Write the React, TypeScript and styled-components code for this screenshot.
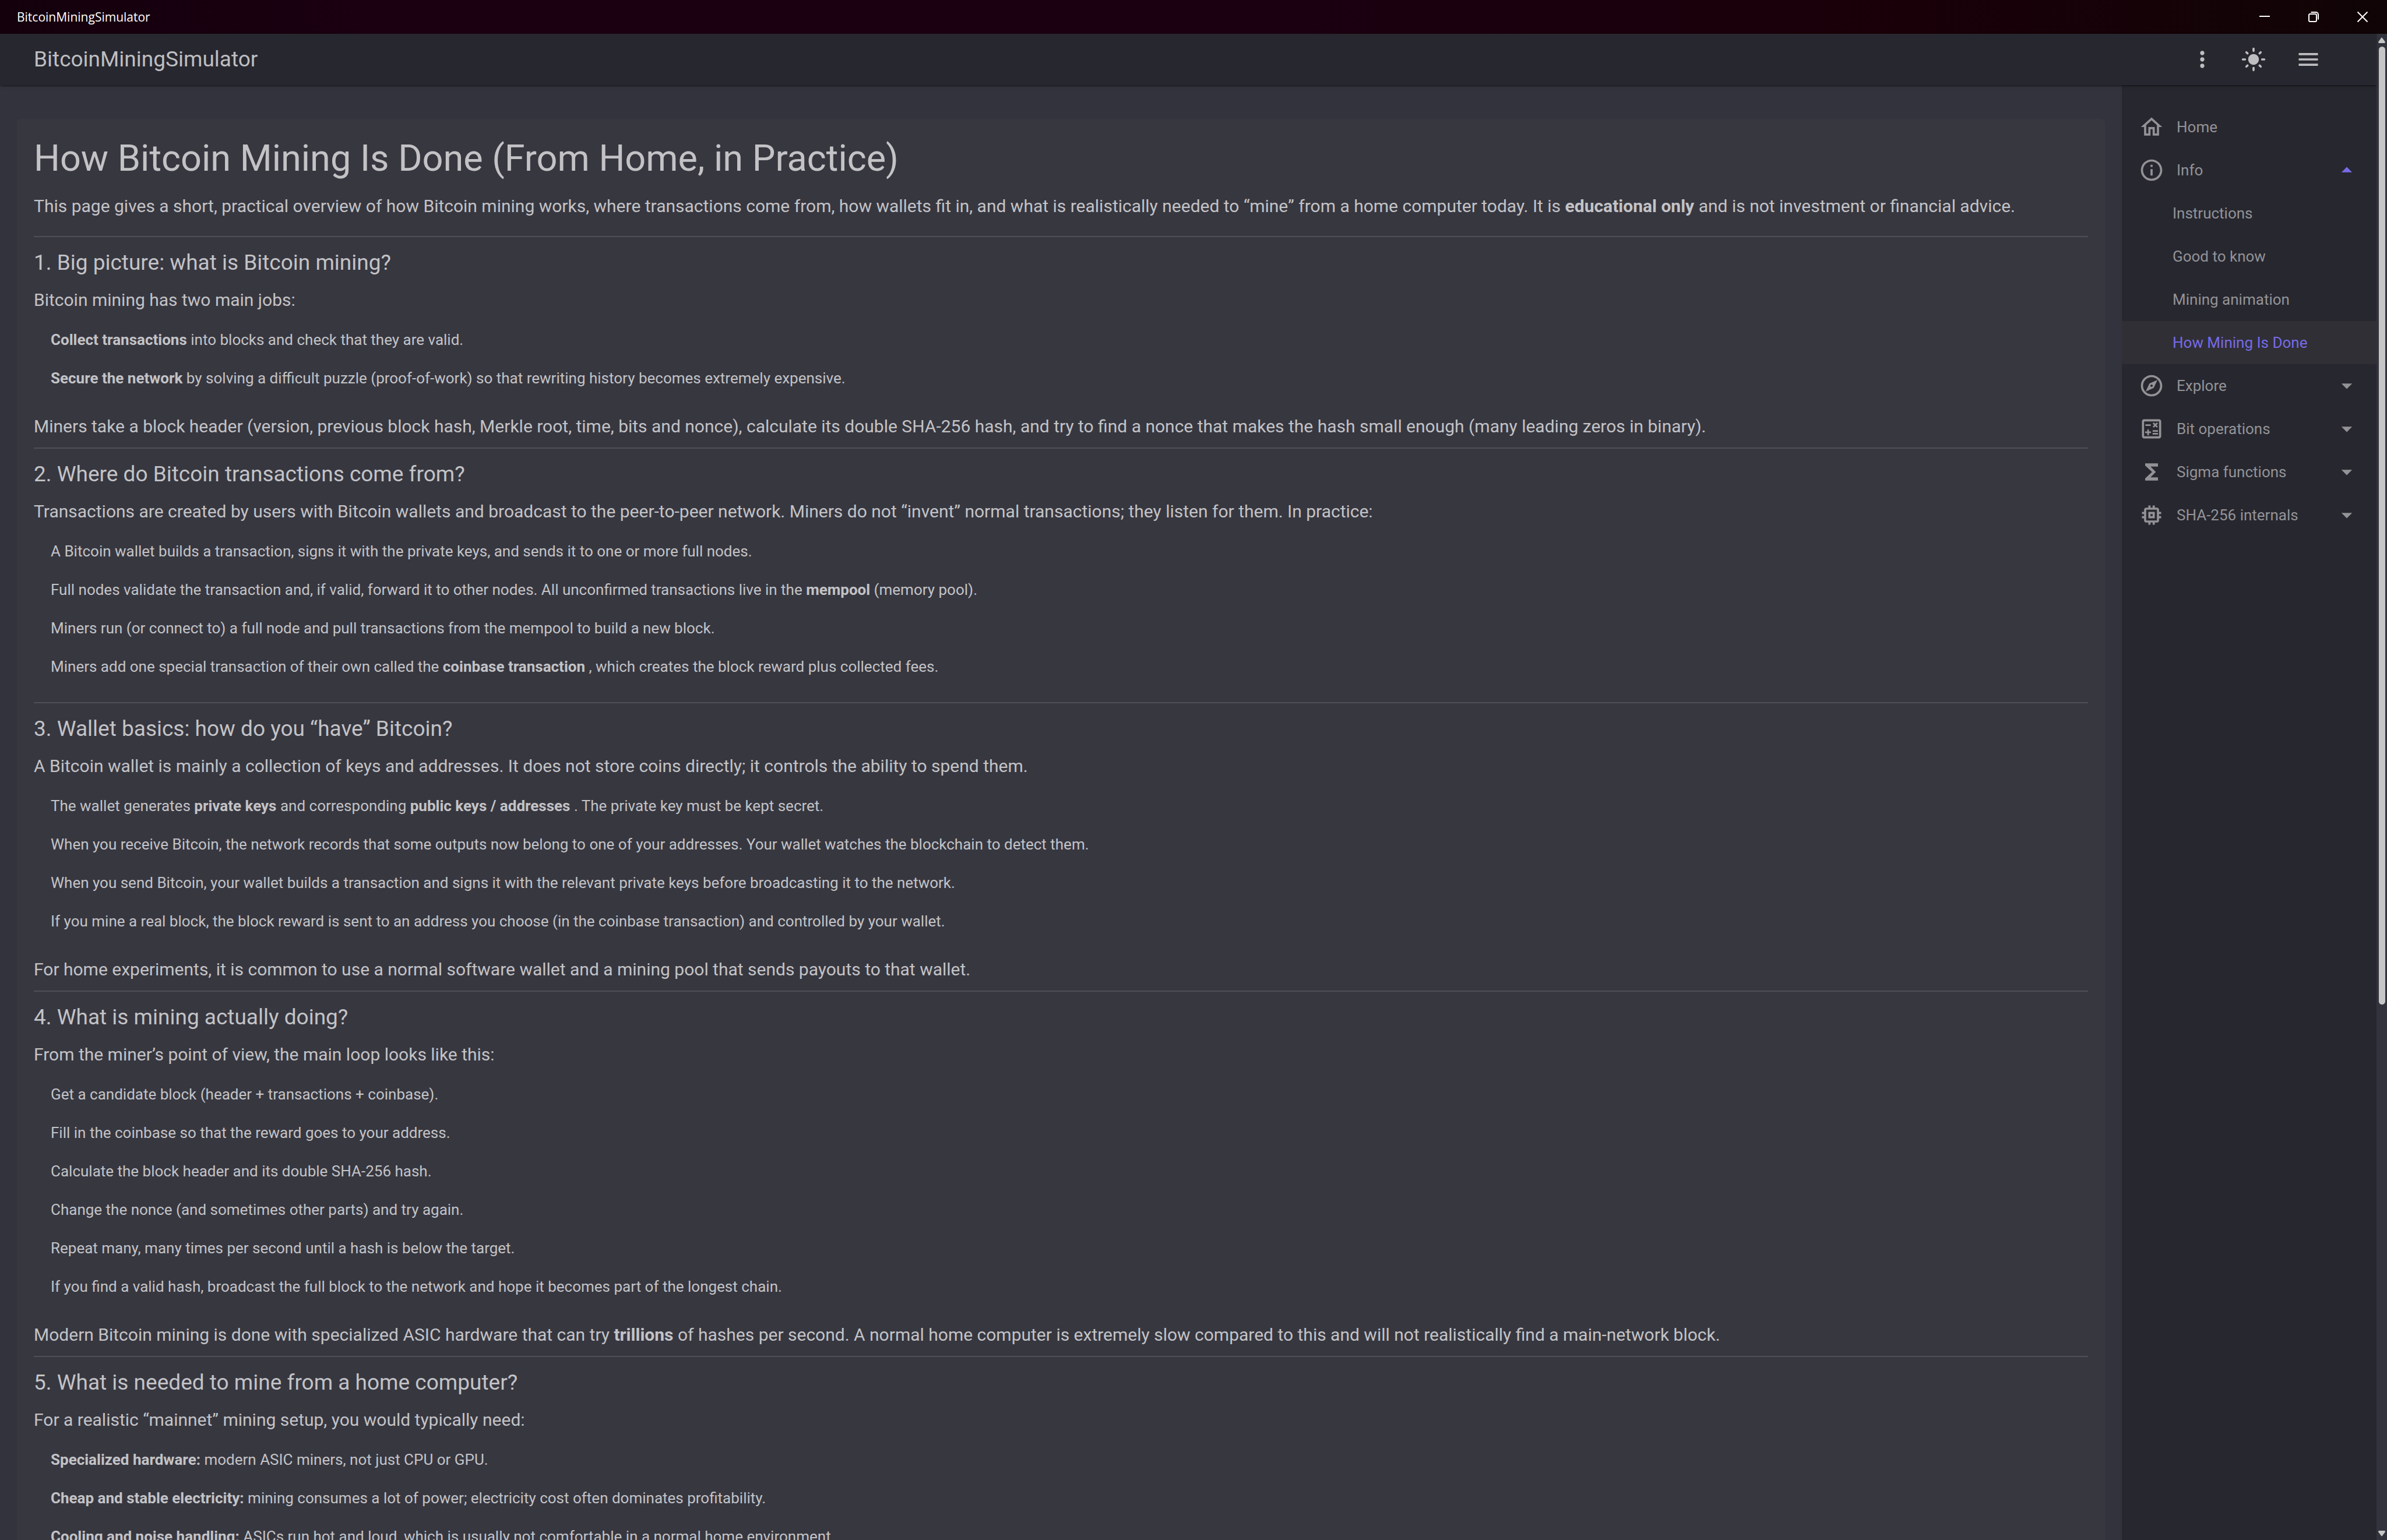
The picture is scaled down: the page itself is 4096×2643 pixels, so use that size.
import React, { useState } from "react";
import styled, { createGlobalStyle } from "styled-components";
import {
  MdArrowDropDown,
  MdArrowDropUp,
  MdFunctions,
  MdLightMode,
  MdMemory,
  MdMenu,
  MdMoreVert,
  MdOutlineCalculate,
  MdOutlineExplore,
  MdOutlineHome,
  MdOutlineInfo,
} from "react-icons/md";

const color = {
  background: "#32333d",
  surface: "#373740",
  chrome: "#27272f",
  active: "#302f36",
  text: "#c3c3c6",
  barText: "#bebec1",
  navText: "#939397",
  primary: "#776be7",
  line: "#4f4f57",
  thumb: "#c6c6c6",
};

const GlobalStyle = createGlobalStyle`
  *, *::before, *::after { box-sizing: border-box; }
  body {
    margin: 0;
    background: ${color.background};
    color: ${color.text};
    font-family: Roboto, "Liberation Sans", sans-serif;
  }
  h1, h2, p, ul { margin: 0; padding: 0; font-weight: 400; }
  ul { list-style: none; }
  button { border: 0; padding: 0; background: none; color: inherit; font: inherit; cursor: pointer; }
  a { color: inherit; text-decoration: none; }
`;

const AppWindow = styled.div`
  display: flex;
  flex-direction: column;
  height: 100vh;
  overflow: hidden;
`;

const TitleBar = styled.header`
  display: flex;
  flex: none;
  align-items: center;
  justify-content: space-between;
  height: 58px;
  padding-left: 29px;
  background: linear-gradient(90deg, #14000d 0%, #1a0010 15%, #1a0010 55%, #190008 80%, #100406 100%);
  color: #fff;
  font: 400 21px/28px "Open Sans", "Noto Sans", sans-serif;
`;

const WindowButtons = styled.div`
  display: flex;
  align-self: stretch;
`;

const WindowButton = styled.button`
  display: grid;
  place-items: center;
  width: 84px;

  svg {
    width: 20px;
    height: 20px;
    fill: none;
    stroke: currentColor;
    stroke-width: 2;
  }
`;

const Viewport = styled.div`
  display: flex;
  flex: 1;
  min-height: 0;
`;

const Page = styled.div`
  display: flex;
  flex: 1;
  flex-direction: column;
  min-width: 0;
`;

const AppBar = styled.header`
  z-index: 1;
  display: flex;
  flex: none;
  align-items: center;
  height: 88px;
  padding: 0 73px 0 58px;
  background: ${color.chrome};
  color: ${color.barText};
  box-shadow: 0 4px 2px -2px rgba(0, 0, 0, 0.2), 0 2px 2px rgba(0, 0, 0, 0.14), 0 2px 6px rgba(0, 0, 0, 0.12);
`;

const AppTitle = styled.a`
  margin-right: auto;
  font-size: 37px;
  line-height: 58px;
`;

const IconButton = styled.button<{ $spaced?: boolean }>`
  display: grid;
  place-items: center;
  width: 88px;
  height: 88px;
  margin-left: ${({ $spaced }) => ($spaced ? "6px" : "0")};

  svg {
    width: 44px;
    height: 44px;
  }
`;

const Columns = styled.div`
  display: flex;
  flex: 1;
  min-height: 0;
`;

const Main = styled.main`
  flex: 1;
  min-width: 0;
  overflow: hidden;
  padding: 58px 29px;
`;

const Paper = styled.article`
  padding: 29px;
  border-radius: 7px;
  background: ${color.surface};
`;

const PageHeading = styled.h1`
  margin-bottom: 22px;
  font-size: 63px;
  line-height: 77px;
`;

const Paragraph = styled.p<{ $after?: boolean }>`
  margin-top: ${({ $after }) => ($after ? "15px" : "0")};
  font-size: 30px;
  line-height: 43px;
`;

const Intro = styled(Paragraph)`
  margin-bottom: 30px;
`;

const Section = styled.section`
  margin-bottom: 15px;
  padding-top: 15px;
  border-top: 2px solid ${color.line};
`;

const SectionHeading = styled.h2`
  margin-bottom: 13px;
  font-size: 37px;
  line-height: 58px;
`;

const List = styled.ul`
  && {
    padding: 14px 0 13px;
  }
`;

const ListItem = styled.li`
  padding: 0 29px;
  font-size: 26px;
  line-height: 66px;
`;

const Drawer = styled.nav`
  flex: none;
  width: 437px;
  padding-top: 35px;
  background: ${color.chrome};
  color: ${color.navText};
  font-size: 26px;
`;

const NavLink = styled.a<{ $active?: boolean }>`
  display: flex;
  align-items: center;
  height: 74px;
  padding: 0 29px 0 87px;
  background: ${({ $active }) => ($active ? color.active : "transparent")};
  color: ${({ $active }) => ($active ? color.primary : "inherit")};
`;

const NavRow = styled.button<{ $open?: boolean }>`
  display: flex;
  align-items: center;
  gap: 21px;
  width: 100%;
  height: 74px;
  padding: 0 29px;

  svg {
    flex: none;
    width: 44px;
    height: 44px;
  }

  svg:last-child {
    margin-left: auto;
    color: ${({ $open }) => ($open ? color.primary : "inherit")};
  }
`;

const HomeLink = styled(NavLink)`
  gap: 21px;
  padding-left: 29px;

  svg {
    width: 44px;
    height: 44px;
  }
`;

const ScrollBar = styled.div`
  display: flex;
  flex: none;
  flex-direction: column;
  align-items: center;
  width: 18px;
  background: ${color.background};
`;

const ScrollButton = styled.button`
  display: grid;
  flex: none;
  place-items: center;
  width: 18px;
  height: 22px;

  svg {
    width: 12px;
    height: 10px;
    fill: ${color.thumb};
  }
`;

const ScrollTrack = styled.div`
  flex: 1;
  width: 11px;
`;

const ScrollThumb = styled.div`
  height: 64.7%;
  border-radius: 6px;
  background: ${color.thumb};
`;

type Topic = {
  title: string;
  lead: string;
  items: React.ReactNode[];
  closing?: React.ReactNode;
};

const topics: Topic[] = [
  {
    title: "1. Big picture: what is Bitcoin mining?",
    lead: "Bitcoin mining has two main jobs:",
    items: [
      <><b>Collect transactions</b> into blocks and check that they are valid.</>,
      <><b>Secure the network</b> by solving a difficult puzzle (proof-of-work) so that rewriting history becomes extremely expensive.</>,
    ],
    closing:
      "Miners take a block header (version, previous block hash, Merkle root, time, bits and nonce), calculate its double SHA-256 hash, and try to find a nonce that makes the hash small enough (many leading zeros in binary).",
  },
  {
    title: "2. Where do Bitcoin transactions come from?",
    lead: "Transactions are created by users with Bitcoin wallets and broadcast to the peer-to-peer network. Miners do not “invent” normal transactions; they listen for them. In practice:",
    items: [
      "A Bitcoin wallet builds a transaction, signs it with the private keys, and sends it to one or more full nodes.",
      <>Full nodes validate the transaction and, if valid, forward it to other nodes. All unconfirmed transactions live in the <b>mempool</b> (memory pool).</>,
      "Miners run (or connect to) a full node and pull transactions from the mempool to build a new block.",
      <>Miners add one special transaction of their own called the <b>coinbase transaction</b> , which creates the block reward plus collected fees.</>,
    ],
  },
  {
    title: "3. Wallet basics: how do you “have” Bitcoin?",
    lead: "A Bitcoin wallet is mainly a collection of keys and addresses. It does not store coins directly; it controls the ability to spend them.",
    items: [
      <>The wallet generates <b>private keys</b> and corresponding <b>public keys / addresses</b> . The private key must be kept secret.</>,
      "When you receive Bitcoin, the network records that some outputs now belong to one of your addresses. Your wallet watches the blockchain to detect them.",
      "When you send Bitcoin, your wallet builds a transaction and signs it with the relevant private keys before broadcasting it to the network.",
      "If you mine a real block, the block reward is sent to an address you choose (in the coinbase transaction) and controlled by your wallet.",
    ],
    closing:
      "For home experiments, it is common to use a normal software wallet and a mining pool that sends payouts to that wallet.",
  },
  {
    title: "4. What is mining actually doing?",
    lead: "From the miner’s point of view, the main loop looks like this:",
    items: [
      "Get a candidate block (header + transactions + coinbase).",
      "Fill in the coinbase so that the reward goes to your address.",
      "Calculate the block header and its double SHA-256 hash.",
      "Change the nonce (and sometimes other parts) and try again.",
      "Repeat many, many times per second until a hash is below the target.",
      "If you find a valid hash, broadcast the full block to the network and hope it becomes part of the longest chain.",
    ],
    closing: (
      <>Modern Bitcoin mining is done with specialized ASIC hardware that can try <b>trillions</b> of hashes per second. A normal home computer is extremely slow compared to this and will not realistically find a main-network block.</>
    ),
  },
  {
    title: "5. What is needed to mine from a home computer?",
    lead: "For a realistic “mainnet” mining setup, you would typically need:",
    items: [
      <><b>Specialized hardware:</b> modern ASIC miners, not just CPU or GPU.</>,
      <><b>Cheap and stable electricity:</b> mining consumes a lot of power; electricity cost often dominates profitability.</>,
      <><b>Cooling and noise handling:</b> ASICs run hot and loud, which is usually not comfortable in a normal home environment.</>,
    ],
  },
];

const infoPages = ["Instructions", "Good to know", "Mining animation", "How Mining Is Done"];

const groups = [
  { label: "Explore", Icon: MdOutlineExplore },
  { label: "Bit operations", Icon: MdOutlineCalculate },
  { label: "Sigma functions", Icon: MdFunctions },
  { label: "SHA-256 internals", Icon: MdMemory },
];

export default function App() {
  const [infoOpen, setInfoOpen] = useState(true);
  const [page, setPage] = useState("How Mining Is Done");

  return (
    <AppWindow>
      <GlobalStyle />
      <TitleBar>
        <span>BitcoinMiningSimulator</span>
        <WindowButtons>
          <WindowButton aria-label="Minimize">
            <svg viewBox="0 0 20 20"><path d="M1 9H19" /></svg>
          </WindowButton>
          <WindowButton aria-label="Restore">
            <svg viewBox="0 0 20 20">
              <rect x="2" y="5" width="13" height="13" rx="2" />
              <path d="M5.5 2H14a4 4 0 0 1 4 4v8.5" />
            </svg>
          </WindowButton>
          <WindowButton aria-label="Close">
            <svg viewBox="0 0 20 20"><path d="M1.5 1.5L18.5 18.5M18.5 1.5L1.5 18.5" /></svg>
          </WindowButton>
        </WindowButtons>
      </TitleBar>

      <Viewport>
        <Page>
          <AppBar>
            <AppTitle href="#">BitcoinMiningSimulator</AppTitle>
            <IconButton aria-label="More"><MdMoreVert /></IconButton>
            <IconButton aria-label="Light mode"><MdLightMode /></IconButton>
            <IconButton aria-label="Menu" $spaced><MdMenu /></IconButton>
          </AppBar>

          <Columns>
            <Main>
              <Paper>
                <PageHeading>How Bitcoin Mining Is Done (From Home, in Practice)</PageHeading>
                <Intro>
                  This page gives a short, practical overview of how Bitcoin mining works, where transactions come from, how wallets fit in, and what is realistically needed to “mine” from a home computer today. It is <b>educational only</b> and is not investment or financial advice.
                </Intro>
                {topics.map((topic) => (
                  <Section key={topic.title}>
                    <SectionHeading>{topic.title}</SectionHeading>
                    <Paragraph>{topic.lead}</Paragraph>
                    <List>
                      {topic.items.map((item, i) => (
                        <ListItem key={i}>{item}</ListItem>
                      ))}
                    </List>
                    {topic.closing && <Paragraph $after>{topic.closing}</Paragraph>}
                  </Section>
                ))}
              </Paper>
            </Main>

            <Drawer aria-label="Pages">
              <HomeLink href="#home"><MdOutlineHome />Home</HomeLink>
              <NavRow $open={infoOpen} aria-expanded={infoOpen} onClick={() => setInfoOpen(!infoOpen)}>
                <MdOutlineInfo />
                Info
                {infoOpen ? <MdArrowDropUp /> : <MdArrowDropDown />}
              </NavRow>
              {infoOpen &&
                infoPages.map((name) => (
                  <NavLink key={name} href="#info" $active={name === page} onClick={() => setPage(name)}>
                    {name}
                  </NavLink>
                ))}
              {groups.map(({ label, Icon }) => (
                <NavRow key={label} aria-expanded={false}>
                  <Icon />
                  {label}
                  <MdArrowDropDown />
                </NavRow>
              ))}
            </Drawer>
          </Columns>
        </Page>

        <ScrollBar>
          <ScrollButton aria-label="Scroll up">
            <svg viewBox="0 0 12 10"><path d="M5 1.2Q6 0 7 1.2L11.6 7.6Q12.4 10 10.6 10H1.4Q-.4 10 .4 7.6Z" /></svg>
          </ScrollButton>
          <ScrollTrack><ScrollThumb /></ScrollTrack>
          <ScrollButton aria-label="Scroll down">
            <svg viewBox="0 0 12 10"><path d="M5 8.8Q6 10 7 8.8L11.6 2.4Q12.4 0 10.6 0H1.4Q-.4 0 .4 2.4Z" /></svg>
          </ScrollButton>
        </ScrollBar>
      </Viewport>
    </AppWindow>
  );
}
